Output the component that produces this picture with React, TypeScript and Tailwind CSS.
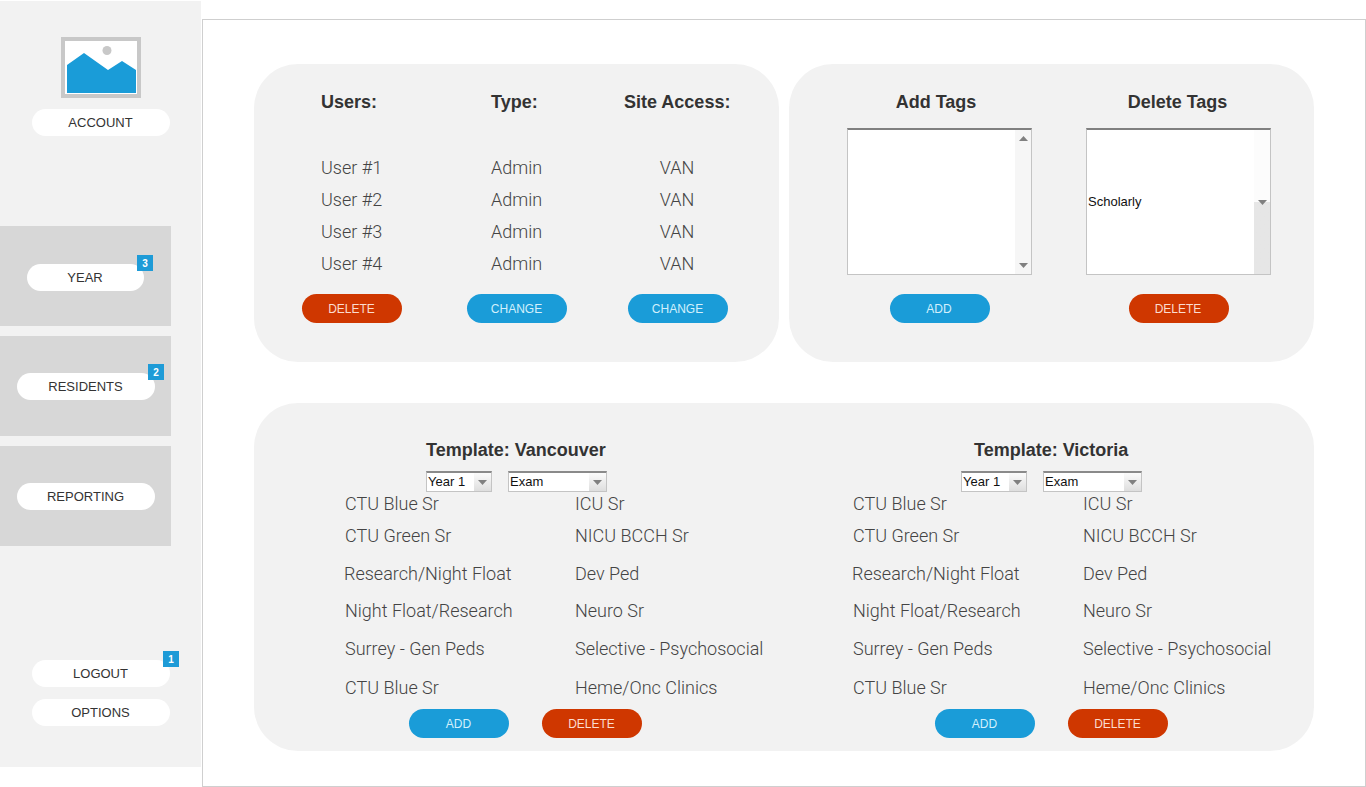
const users = ["User #1", "User #2", "User #3", "User #4"];

const rotations = [
  ["CTU Blue Sr", "ICU Sr"],
  ["CTU Green Sr", "NICU BCCH Sr"],
  ["Research/Night Float", "Dev Ped"],
  ["Night Float/Research", "Neuro Sr"],
  ["Surrey - Gen Peds", "Selective - Psychosocial"],
  ["CTU Blue Sr", "Heme/Onc Clinics"],
];

function Arrow({ up = false }: { up?: boolean }) {
  return (
    <svg width="9" height="5" viewBox="0 0 9 5" className="block">
      <polygon points={up ? "4.5,0 9,5 0,5" : "0,0 9,0 4.5,5"} fill="#808080" />
    </svg>
  );
}

function Pill({ label, badge, className }: { label: string; badge?: string; className: string }) {
  return (
    <div className={`relative flex h-[27px] items-center justify-center rounded-full bg-white pr-px text-[13px] text-[#333] ${className}`}>
      {label}
      {badge && (
        <span className="absolute -top-[9px] -right-[9px] flex h-4 w-4 items-center justify-center bg-[#1e9bd7] text-[10px] font-bold text-white">
          {badge}
        </span>
      )}
    </div>
  );
}

function Btn({ label, red = false }: { label: string; red?: boolean }) {
  return (
    <div
      className={
        red
          ? "flex h-[29px] w-[100px] items-center justify-center rounded-full bg-[#cf3700] pr-px text-xs text-[#fbdccf]"
          : "flex h-[29px] w-[100px] items-center justify-center rounded-full bg-[#1a9cd8] pr-px text-xs text-[#d3f0fc]"
      }
    >
      {label}
    </div>
  );
}

function Dropdown({ label, className }: { label: string; className: string }) {
  return (
    <div className={`flex h-[21px] items-stretch border border-t-2 border-[#c4c4c4] border-t-[#8a8a8a] bg-white text-[13px] leading-[18px] text-[#111] ${className}`}>
      <span className="flex-1 pl-px">{label}</span>
      <span className="flex w-[17px] items-center justify-center bg-gradient-to-b from-[#fbfbfb] to-[#dedede]">
        <Arrow />
      </span>
    </div>
  );
}

function Template({ title, titleGap, selectGap, buttonGap, className }: { title: string; titleGap: string; selectGap: string; buttonGap: string; className: string }) {
  return (
    <div className={`shrink-0 ${className}`}>
      <h3 className={`h-6 text-lg leading-6 font-bold text-[#333] ${titleGap}`}>{title}</h3>
      <div className={`mt-[9px] flex gap-4 ${selectGap}`}>
        <Dropdown label="Year 1" className="w-[66px]" />
        <Dropdown label="Exam" className="w-[99px]" />
      </div>
      <div className="grid grid-cols-[230px_1fr] grid-rows-[24px_40px_36px_38px_38px_40px] font-['Roboto',sans-serif] text-lg font-light text-[#444]">
        {rotations.map(([left, right], i) => (
          <div key={i} className="contents">
            <span className={i === 2 ? "-ml-px self-center" : "self-center"}>{left}</span>
            <span className="self-center">{right}</span>
          </div>
        ))}
      </div>
      <div className={`mt-px flex gap-[33px] ${buttonGap}`}>
        <Btn label="ADD" />
        <Btn label="DELETE" red />
      </div>
    </div>
  );
}

export default function App() {
  return (
    <div className="flex h-[787px] w-[1366px] overflow-hidden bg-white font-['Liberation_Sans',Arial,sans-serif]">
      <aside className="mt-px flex h-[766px] w-[201px] shrink-0 flex-col bg-[#f2f2f2]">
        <svg width="80" height="61" viewBox="0 0 80 61" className="mt-9 ml-[61px] block">
          <rect x="2" y="2" width="76" height="57" fill="#fff" stroke="#c8c8c8" strokeWidth="4" />
          <circle cx="46" cy="13.5" r="4.5" fill="#c8c8c8" />
          <polygon points="6,28 23,16 47,33 61,24 75,33 75,56 6,56" fill="#1a9cd8" />
        </svg>
        <Pill label="ACCOUNT" className="mt-[11px] ml-8 w-[138px]" />

        <div className="mt-[90px] flex h-[100px] w-[171px] items-start bg-[#d7d7d7] pt-[38px] pl-[27px]">
          <Pill label="YEAR" badge="3" className="w-[117px]" />
        </div>
        <div className="mt-2.5 flex h-[100px] w-[171px] items-start bg-[#d7d7d7] pt-[37px] pl-[17px]">
          <Pill label="RESIDENTS" badge="2" className="w-[138px]" />
        </div>
        <div className="mt-2.5 flex h-[100px] w-[171px] items-start bg-[#d7d7d7] pt-[37px] pl-[17px]">
          <Pill label="REPORTING" className="w-[138px]" />
        </div>

        <Pill label="LOGOUT" badge="1" className="mt-[114px] ml-8 w-[138px]" />
        <Pill label="OPTIONS" className="mt-3 ml-8 w-[138px]" />
      </aside>

      <main className="mt-[19px] ml-px flex-1 border border-[#cfcfcf] pt-[44px] pl-[51px]">
        <div className="flex gap-2.5">
          <section className="h-[298px] w-[525px] rounded-[44px] bg-[#f2f2f2] pt-[26px] pl-[48px]">
            <div className="flex">
              <div className="w-[100px]">
                <h3 className="h-6 pl-[19px] text-lg leading-6 font-bold text-[#333]">Users:</h3>
                <div className="mt-[38px] font-['Roboto',sans-serif] text-lg leading-8 font-light text-[#444]">
                  {users.map((u) => (
                    <div key={u} className="pl-[19px]">{u}</div>
                  ))}
                </div>
                <div className="mt-3.5">
                  <Btn label="DELETE" red />
                </div>
              </div>
              <div className="ml-[65px] w-[100px]">
                <h3 className="h-6 pl-6 text-lg leading-6 font-bold text-[#333]">Type:</h3>
                <div className="mt-[38px] font-['Roboto',sans-serif] text-lg leading-8 font-light text-[#444]">
                  {users.map((u) => (
                    <div key={u} className="pl-6">Admin</div>
                  ))}
                </div>
                <div className="mt-3.5">
                  <Btn label="CHANGE" />
                </div>
              </div>
              <div className="ml-[61px] w-[100px]">
                <h3 className="-ml-1 h-6 text-lg leading-6 font-bold whitespace-nowrap text-[#333]">Site Access:</h3>
                <div className="mt-[38px] pr-0.5 text-center font-['Roboto',sans-serif] text-lg leading-8 font-light text-[#444]">
                  {users.map((u) => (
                    <div key={u}>VAN</div>
                  ))}
                </div>
                <div className="mt-3.5">
                  <Btn label="CHANGE" />
                </div>
              </div>
            </div>
          </section>

          <section className="flex h-[298px] w-[525px] gap-[54px] rounded-[44px] bg-[#f2f2f2] pt-[26px] pl-[58px]">
            <div className="flex w-[185px] flex-col items-center">
              <h3 className="h-6 pr-[7px] text-lg leading-6 font-bold text-[#333]">Add Tags</h3>
              <div className="mt-3.5 flex h-[147px] w-full justify-end border border-t-2 border-[#c4c4c4] border-t-[#808080] bg-white">
                <div className="flex w-4 flex-col items-center justify-between bg-[#f6f6f6] py-1.5">
                  <Arrow up />
                  <Arrow />
                </div>
              </div>
              <div className="mt-[19px]">
                <Btn label="ADD" />
              </div>
            </div>
            <div className="flex w-[185px] flex-col items-center">
              <h3 className="h-6 pr-0.5 text-lg leading-6 font-bold text-[#333]">Delete Tags</h3>
              <div className="mt-3.5 flex h-[147px] w-full items-center border border-t-2 border-[#c4c4c4] border-t-[#808080] bg-white">
                <span className="flex-1 pl-px text-[13px] text-[#111]">Scholarly</span>
                <div className="flex h-full w-4 items-center justify-center bg-gradient-to-b from-[#fcfcfc] from-50% to-[#e6e6e6] to-50%">
                  <Arrow />
                </div>
              </div>
              <div className="mt-[19px]">
                <Btn label="DELETE" red />
              </div>
            </div>
          </section>
        </div>

        <section className="mt-[41px] flex h-[348px] w-[1060px] rounded-[44px] bg-[#f2f2f2] pt-[35px] pl-[91px]">
          <Template title="Template: Vancouver" titleGap="ml-[81px]" selectGap="ml-[81px]" buttonGap="ml-16" className="w-[508px]" />
          <Template title="Template: Victoria" titleGap="ml-[121px]" selectGap="ml-[108px]" buttonGap="ml-[82px]" className="w-[430px]" />
        </section>
      </main>
    </div>
  );
}
